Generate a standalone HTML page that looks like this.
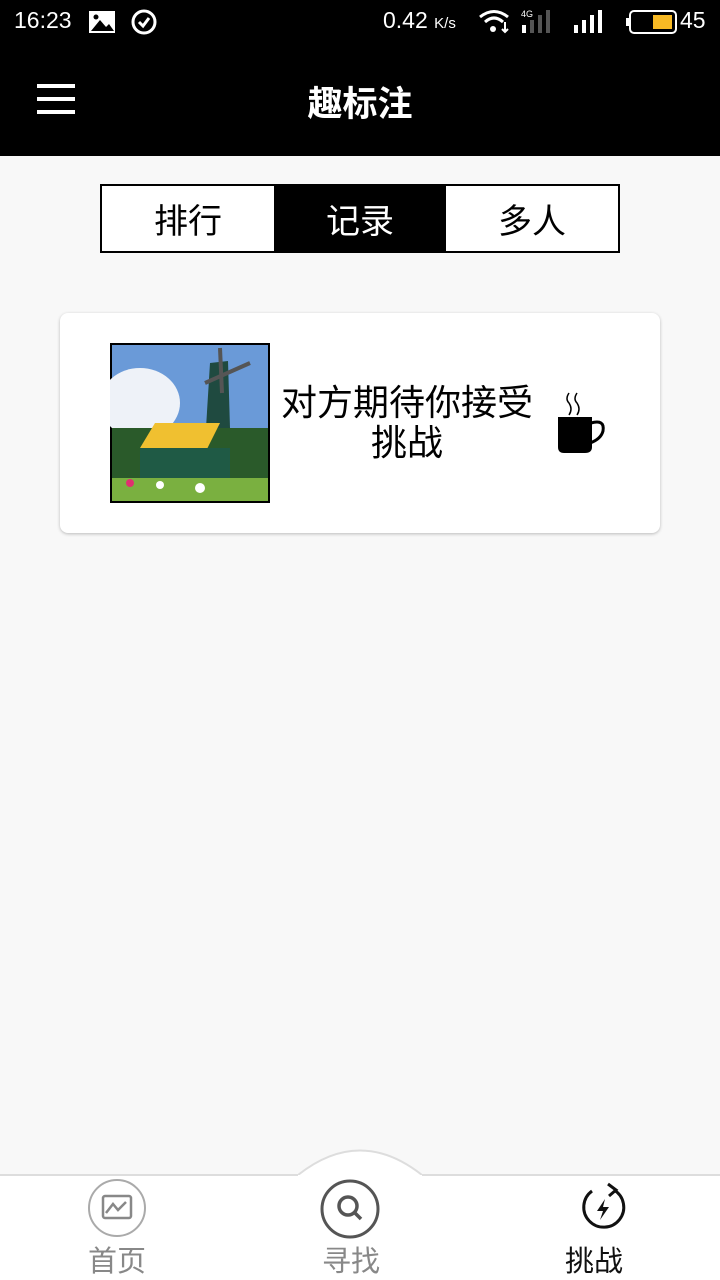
<!DOCTYPE html>
<html><head><meta charset="utf-8"><style>
*{margin:0;padding:0;box-sizing:border-box}
body{width:720px;height:1280px;background:#f8f8f8;font-family:"Liberation Sans","Noto Sans CJK SC",sans-serif;position:relative;overflow:hidden}
.top{position:absolute;left:0;top:0;width:720px;height:156px;background:#000;color:#fff}
.sb{position:absolute;top:7px;font-size:23px;color:#fff}
.title{position:absolute;top:76px;left:0;width:720px;text-align:center;font-size:35px;font-weight:bold}
.tabs{position:absolute;left:100px;top:184px;width:520px;height:69px;border:2px solid #000;display:flex;background:#fff}
.tabs div{flex:1;display:flex;align-items:center;justify-content:center;font-size:34px}
.card{position:absolute;left:60px;top:313px;width:600px;height:220px;background:#fff;border-radius:8px;box-shadow:0 1px 3px rgba(0,0,0,.25)}
.bar{position:absolute;left:0;top:1174px;width:720px;height:106px;background:#fff;border-top:2px solid #ddd}
.lbl{position:absolute;top:1238px;font-size:29px;color:#888}
</style></head><body>
<div class="top">
<div class="sb" style="left:14px">16:23</div>
<svg style="position:absolute;left:88px;top:10px" width="28" height="24"><rect x="1" y="1" width="26" height="22" fill="#fff"/><path d="M3 21 L12 10 L18 17 L21 14 L26 21Z" fill="#000"/><circle cx="8" cy="7" r="2.5" fill="#000"/></svg>
<svg style="position:absolute;left:130px;top:8px" width="28" height="28"><circle cx="14" cy="14" r="11" fill="none" stroke="#fff" stroke-width="3"/><path d="M9 14 L13 18 L19 10" fill="none" stroke="#fff" stroke-width="3"/></svg>
<div class="sb" style="left:383px">0.42 <span style="font-size:15px">K/s</span></div>
<svg style="position:absolute;left:478px;top:8px" width="34" height="28"><path d="M2 9 Q16 -2 30 9" fill="none" stroke="#fff" stroke-width="3"/><path d="M7 14 Q16 6 25 14" fill="none" stroke="#fff" stroke-width="3"/><circle cx="15" cy="21" r="3" fill="#fff"/><path d="M27 14v10M24 21l3 3 3-3" stroke="#fff" stroke-width="2" fill="none"/></svg>
<svg style="position:absolute;left:520px;top:8px" width="40" height="26"><text x="1" y="9" font-size="9" fill="#fff">4G</text><rect x="2" y="17" width="4" height="8" fill="#fff"/><rect x="10" y="12" width="4" height="13" fill="#555"/><rect x="18" y="7" width="4" height="18" fill="#555"/><rect x="26" y="2" width="4" height="23" fill="#555"/></svg>
<svg style="position:absolute;left:572px;top:8px" width="40" height="26"><rect x="2" y="17" width="4" height="8" fill="#fff"/><rect x="10" y="12" width="4" height="13" fill="#fff"/><rect x="18" y="7" width="4" height="18" fill="#fff"/><rect x="26" y="2" width="4" height="23" fill="#fff"/></svg>
<svg style="position:absolute;left:626px;top:10px" width="52" height="24"><rect x="4" y="1" width="46" height="22" rx="4" fill="none" stroke="#fff" stroke-width="2"/><rect x="0" y="8" width="4" height="8" fill="#fff"/><rect x="27" y="5" width="19" height="14" fill="#f7b924"/></svg>
<div class="sb" style="left:680px">45</div>
<svg style="position:absolute;left:37px;top:84px" width="38" height="30"><rect y="0" width="38" height="4" fill="#fff"/><rect y="13" width="38" height="4" fill="#fff"/><rect y="26" width="38" height="4" fill="#fff"/></svg>
<div class="title">趣标注</div>
</div>
<div class="tabs"><div>排行</div><div style="background:#000;color:#fff">记录</div><div>多人</div></div>
<div class="card">
<svg style="position:absolute;left:50px;top:30px" width="160" height="160">
<rect width="160" height="160" fill="#000"/>
<rect x="2" y="2" width="156" height="156" fill="#6a9ad8"/>
<ellipse cx="30" cy="60" rx="40" ry="35" fill="#eef2f8"/>
<rect x="2" y="85" width="156" height="73" fill="#2a5a2a"/>
<path d="M100 20 L118 18 L120 85 L96 85Z" fill="#1f4a40"/>
<path d="M110 5 L112 50 M95 40 L140 20" stroke="#555" stroke-width="4"/>
<path d="M30 105 L45 80 L110 80 L95 110Z" fill="#f0c030"/>
<rect x="30" y="105" width="90" height="35" fill="#1f5a45"/>
<rect x="2" y="135" width="156" height="23" fill="#7ab040"/>
<circle cx="20" cy="140" r="4" fill="#e03070"/><circle cx="50" cy="142" r="4" fill="#fff"/><circle cx="90" cy="145" r="5" fill="#fff"/>
</svg>
<div style="position:absolute;left:212px;top:70px;width:270px;text-align:center;font-size:36px;line-height:40px">对方期待你接受<br>挑战</div>
<svg style="position:absolute;left:495px;top:78px" width="52" height="64"><path d="M14 2 q-4 6 0 10 q4 6 0 12 M22 2 q-4 6 0 10 q4 6 0 12" stroke="#000" stroke-width="1.5" fill="none"/><path d="M3 26 H37 V56 Q37 62 30 62 H9 Q3 62 3 56Z" fill="#000"/><path d="M36 32 Q50 28 48 40 Q46 48 35 52" stroke="#000" stroke-width="3" fill="none"/></svg>
</div>
<div class="bar"></div>
<svg style="position:absolute;left:298px;top:1148px" width="124" height="30"><path d="M0 27 Q62 -22 124 27" fill="#fff" stroke="#ddd" stroke-width="2"/><rect x="0" y="27" width="124" height="3" fill="#fff"/></svg>
<svg style="position:absolute;left:87px;top:1178px" width="60" height="60"><circle cx="30" cy="30" r="28" fill="none" stroke="#aaa" stroke-width="2"/><rect x="16" y="18" width="28" height="22" rx="2" fill="none" stroke="#888" stroke-width="2.5"/><path d="M19 35 L26 26 L31 32 L39 24" fill="none" stroke="#888" stroke-width="2.5"/></svg>
<svg style="position:absolute;left:319px;top:1178px" width="62" height="62"><circle cx="31" cy="31" r="28" fill="none" stroke="#555" stroke-width="3"/><circle cx="29" cy="28" r="9" fill="none" stroke="#555" stroke-width="3.5"/><path d="M35 34 L42 41" stroke="#555" stroke-width="3.5"/></svg>
<svg style="position:absolute;left:578px;top:1182px" width="50" height="50"><path d="M36 8 A20 20 0 1 1 14 9" fill="none" stroke="#111" stroke-width="3"/><path d="M30 2 L38 8 L31 14" fill="none" stroke="#111" stroke-width="3"/><path d="M27 17 L19 29 H25 L22 38 L31 25 H25Z" fill="#111"/></svg>
<div class="lbl" style="left:88px">首页</div>
<div class="lbl" style="left:322px">寻找</div>
<div class="lbl" style="left:565px;color:#111">挑战</div>
</body></html>
